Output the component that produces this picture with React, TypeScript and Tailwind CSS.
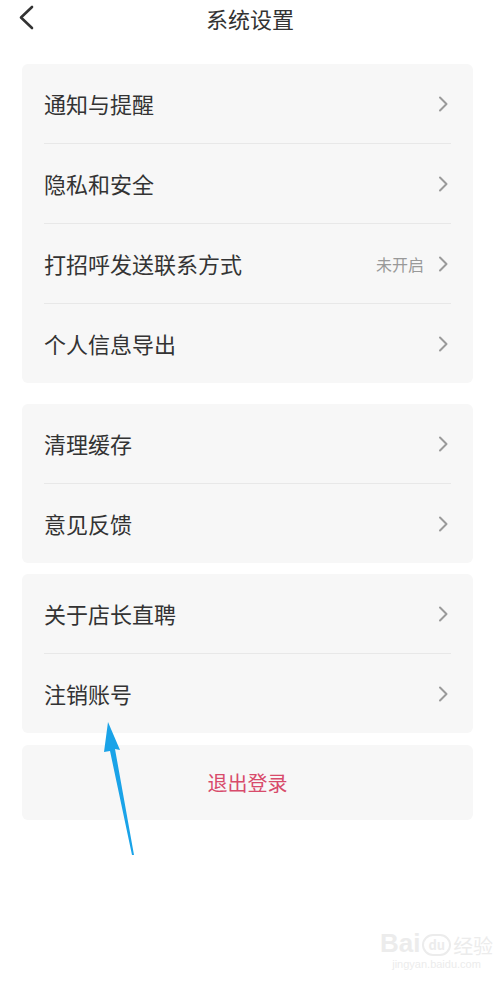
const GROUPS = [
  [
    { label: '通知与提醒' },
    { label: '隐私和安全' },
    { label: '打招呼发送联系方式', value: '未开启' },
    { label: '个人信息导出' },
  ],
  [{ label: '清理缓存' }, { label: '意见反馈' }],
  [{ label: '关于店长直聘' }, { label: '注销账号' }],
];

const GAPS = ['mt-7', 'mt-[21px]', 'mt-[11px]'];

function Chevron() {
  return (
    <svg width="11" height="16" viewBox="0 0 11 16" fill="none">
      <polyline points="2,1.5 8.5,8 2,14.5" stroke="#9a9a9a" strokeWidth="2" strokeLinecap="round" strokeLinejoin="round" />
    </svg>
  );
}

function Row({ label, value }: { label: string; value?: string }) {
  return (
    <div className="h-[79px] flex items-center justify-between">
      <span className="text-[22px] text-[#333]">{label}</span>
      <div className="flex items-center gap-[14px] text-[#999]">
        {value && <span className="text-[16px]">{value}</span>}
        <Chevron />
      </div>
    </div>
  );
}

export default function App() {
  return (
    <div
      className="relative w-[500px] h-[987px] bg-white overflow-hidden"
      style={{ fontFamily: '"Noto Sans CJK SC", "Noto Sans", sans-serif' }}
    >
      <div className="relative h-9 flex items-center justify-center">
        <svg className="absolute left-[18px] top-[5px]" width="17" height="26" viewBox="0 0 17 26" fill="none">
          <polyline points="14,2 3,12.5 14,23" stroke="#333" strokeWidth="2.6" strokeLinecap="round" strokeLinejoin="round" />
        </svg>
        <span className="text-[22px] text-[#333]">系统设置</span>
      </div>

      {GROUPS.map((rows, i) => (
        <div key={i} className={`${GAPS[i]} ml-[22px] mr-[27px] rounded-md bg-[#f7f7f7] pl-[22px] pr-[24px]`}>
          {rows.map((r, j) => (
            <div key={r.label}>
              {j > 0 && <div className="h-px bg-[#e8e8e8] -mr-[2px]" />}
              <Row label={r.label} value={r.value} />
            </div>
          ))}
        </div>
      ))}

      <div className="mt-3 ml-[22px] mr-[27px] h-[75px] rounded-md bg-[#f7f7f7] flex items-center justify-center">
        <span className="text-[20px] text-[#d84b6b]">退出登录</span>
      </div>

      {/* annotation arrow */}
      <svg className="absolute left-0 top-0" width="500" height="987" viewBox="0 0 500 987">
        <polygon points="108,722 120,750 115,749 134,855 132,855 110,751 104,752" fill="#1aa3e8" />
      </svg>

      {/* watermark */}
      <div className="absolute left-[380px] top-[930px] flex flex-col items-center text-[#ececec]">
        <div className="flex items-end">
          <span className="text-[26px] leading-none font-bold" style={{ fontFamily: '"Liberation Sans", sans-serif' }}>
            Bai
          </span>
          <span className="mx-[2px] rounded-full border-2 border-[#ececec] px-1 text-[13px] leading-[18px] font-bold">du</span>
          <span className="text-[20px] leading-none">经验</span>
        </div>
        <span className="text-[11px] leading-[16px]" style={{ fontFamily: '"Liberation Sans", sans-serif' }}>
          jingyan.baidu.com
        </span>
      </div>
    </div>
  );
}
